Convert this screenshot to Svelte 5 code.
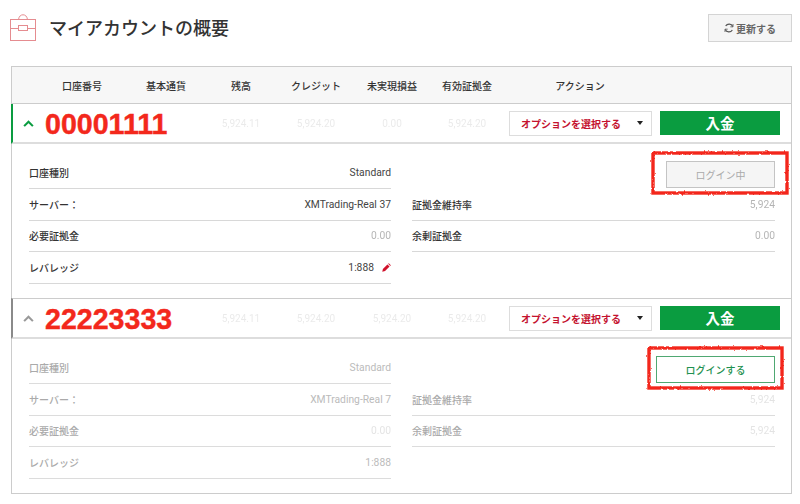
<script>
  const columns = ['口座番号', '基本通貨', '残高', 'クレジット', '未実現損益', '有効証拠金', 'アクション'];
  const accounts = [
    { id: '00001111', active: true, server: 'XMTrading-Real 37', values: ['5,924.11', '5,924.20', '0.00', '5,924.20'], margin: '0.00', free: '', level: '', edit: true },
    { id: '22223333', active: false, server: 'XMTrading-Real 7', values: ['5,924.11', '5,924.20', '5,924.20', '5,924.20'], margin: '0.00', free: '5,924', level: '', edit: false }
  ];
</script>

<div class="page">
  <header class="top">
    <div class="title-wrap">
      <svg class="case" viewBox="0 0 27 27" width="27" height="27" fill="none" stroke="#e58c90" stroke-width="1">
        <rect x="0.5" y="5.5" width="25" height="21" />
        <path d="M0.5 14.5H8.5M17.5 14.5H25.5" />
        <rect x="8.5" y="11.5" width="9" height="5" />
        <path d="M8.5 5.5C9 2 11 0.8 13 0.8C15 0.8 17 2 17.5 5.5" />
      </svg>
      <h1>マイアカウントの概要</h1>
    </div>
    <button class="refresh">
      <svg viewBox="0 0 12 12" width="10" height="10" fill="none" stroke="#555" stroke-width="1.4">
        <path d="M10.5 4.2A4.8 4.8 0 0 0 2 3.6M1.5 7.8A4.8 4.8 0 0 0 10 8.4" />
        <path d="M10.8 1.2V4.6H7.6M1.2 10.8V7.4H4.4" stroke-width="1" />
      </svg>
      更新する
    </button>
  </header>

  <section class="table">
    <div class="grid head">
      <span></span>
      {#each columns as c}<span class="cell">{c}</span>{/each}
    </div>

    {#each accounts as a}
      <div class="grid row" class:active={a.active}>
        <svg class="chev" viewBox="0 0 12 8" width="11" height="7" fill="none" stroke-width="2.4">
          <path d="M1 7L6 2L11 7" />
        </svg>
        <strong class="acct">{a.id}</strong>
        {#each a.values as v}<span class="cell blur">{v}</span>{/each}
        <div class="select">オプションを選択する<i class="caret"></i></div>
        <button class="deposit">入金</button>
      </div>

      <div class="panel" class:off={!a.active}>
        <div class="col">
          <div class="line"><b>口座種別</b><span>Standard</span></div>
          <div class="line"><b>サーバー：</b><span>{a.server}</span></div>
          <div class="line"><b>必要証拠金</b><span class="blur">0.00</span></div>
          <div class="line">
            <b>レバレッジ</b>
            <span class="lev">1:888
              {#if a.edit}
                <svg viewBox="0 0 10 10" width="9" height="9" fill="#d0112b"><path d="M0.3 9.7L1 6.6L6 1.6L8.4 4L3.4 9ZM6.8 0.8L7.6 0.2L9.8 2.4L9.2 3.2Z" /></svg>
              {/if}
            </span>
          </div>
        </div>
        <div class="col">
          <div class="line plain">
            <div class="mark" class:wide={!a.active}>
              <svg class="scribble" preserveAspectRatio="none" viewBox="0 0 140 46">
                <defs>
                  <filter id={'rough' + a.id} x="-5%" y="-10%" width="110%" height="120%">
                    <feTurbulence type="fractalNoise" baseFrequency="0.35" numOctaves="2" seed="4" />
                    <feDisplacementMap in="SourceGraphic" scale="2.5" />
                  </filter>
                </defs>
                <rect x="3" y="3" width="134" height="40" fill="none" stroke="#f3281c" stroke-width="3.4" filter={'url(#rough' + a.id + ')'} />
              </svg>
              {#if a.active}
                <button class="login busy">ログイン中</button>
              {:else}
                <button class="login go">ログインする</button>
              {/if}
            </div>
          </div>
          <div class="line"><b>証拠金維持率</b><span class="blur">{a.level || '5,924'}</span></div>
          <div class="line"><b>余剰証拠金</b><span class="blur">{a.free || '0.00'}</span></div>
        </div>
      </div>
    {/each}
  </section>
</div>

<style>
  :global(body) {
    margin: 0;
    background: #fff;
    font-family: "Noto Sans CJK JP", "Liberation Sans", sans-serif;
    color: #333;
  }
  .page {
    width: 800px;
    height: 504px;
    box-sizing: border-box;
    padding: 0 8px 0 11px;
    overflow: hidden;
  }
  .top {
    height: 66px;
    display: flex;
    justify-content: space-between;
    align-items: flex-start;
  }
  .title-wrap {
    display: flex;
    align-items: center;
    gap: 12px;
    margin: 14px 0 0 -1px;
  }
  .case { display: block; }
  h1 {
    margin: 0;
    font-size: 18px;
    line-height: 27px;
    font-weight: 500;
    color: #333;
  }
  button { font-family: inherit; cursor: pointer; padding: 0; }
  .refresh {
    margin-top: 14px;
    width: 84px;
    height: 28px;
    border: 1px solid #d4d4d4;
    background: #f5f5f5;
    color: #666;
    font-size: 10px;
    font-weight: 700;
    display: flex;
    align-items: center;
    justify-content: center;
    gap: 2px;
  }
  .table {
    width: 781px;
    height: 428px;
    box-sizing: border-box;
    border: 1px solid #ccc;
  }
  .grid {
    display: grid;
    grid-template-columns: 27px 84px 84px 66px 84px 68px 82px 152px 120px;
    align-items: center;
  }
  .head {
    height: 36px;
    background: #f7f7f7;
    border-bottom: 1px solid #ccc;
    font-size: 10px;
    font-weight: 500;
    color: #333;
    grid-template-columns: 28px 84px 84px 66px 84px 68px 82px 144px;
  }
  .cell { text-align: center; }
  .row {
    height: 38px;
    margin-left: -1px;
    border-left: 2px solid #8a8a8a;
    border-bottom: 2px solid #ddd;
    background: #fff;
  }
  .row.active { border-left-color: #0a9c40; }
  .row:not(.active) { border-top: 1px solid #ccc; }
  .chev { justify-self: center; margin-left: 4px; stroke: #999; }
  .active .chev { stroke: #0a9c40; }
  .acct {
    grid-column: span 2;
    padding: 3px 0 0 5px;
    font: 700 28.6px/1 "Liberation Sans", sans-serif;
    color: #f3281c;
    -webkit-text-stroke: 0.4px #f3281c;
  }
  .row .blur { color: #ccc; }
  .blur {
    font-family: "Roboto", sans-serif;
    font-size: 10px;
    filter: blur(0.7px);
    opacity: 0.4;
  }
  .select {
    width: 143px;
    height: 25px;
    box-sizing: border-box;
    border: 1px solid #ddd;
    display: flex;
    align-items: center;
    justify-content: space-between;
    padding: 0 8px 0 11px;
    font-size: 10px;
    font-weight: 700;
    color: #c4122f;
    margin-left: 1px;
  }
  .caret {
    border: 3px solid transparent;
    border-top: 4px solid #222;
    border-bottom: 0;
    width: 0;
    height: 0;
  }
  .deposit {
    width: 120px;
    height: 24px;
    border: 0;
    background: #0a9c40;
    color: #fff;
    font-size: 14.5px;
    font-weight: 700;
    line-height: 24px;
  }
  .panel {
    display: grid;
    grid-template-columns: 362px 363px;
    column-gap: 21px;
    padding: 13px 0 14px 17px;
    height: 127px;
    font-size: 10px;
  }
  .row:not(.active) + .panel { padding-bottom: 0; }
  .line {
    height: 30.75px;
    border-bottom: 1px solid #d8d8d8;
    display: flex;
    justify-content: space-between;
    align-items: center;
  }
  .line b { font-weight: 500; color: #333; }
  .line span { color: #444; font-family: "Roboto", sans-serif; font-size: 10.3px; }
  .line .lev { display: flex; align-items: center; gap: 8px; }
  .plain { border-bottom-color: transparent; justify-content: flex-end; align-items: flex-end; }
  .mark { position: relative; display: flex; }
  .scribble {
    position: absolute;
    left: -16px;
    top: -11px;
    width: 140px;
    height: 46px;
    overflow: visible;
    pointer-events: none;
  }
  .mark.wide .scribble { left: -10px; width: 139px; }
  .login {
    height: 27px;
    font-size: 10px;
    background: #fff;
  }
  .busy {
    width: 109px;
    background: #f5f5f5;
    border: 1px solid #c4c4c4;
    color: #aaa;
  }
  .go {
    width: 119px;
    border: 1px solid #4fa872;
    color: #1f9150;
    font-weight: 500;
  }
  .off .line b { color: #aaa; }
  .off .line span { color: #bbb; }
  .off .line { border-bottom-color: #dcdcdc; }
  .off .plain { border-bottom-color: transparent; }
</style>
